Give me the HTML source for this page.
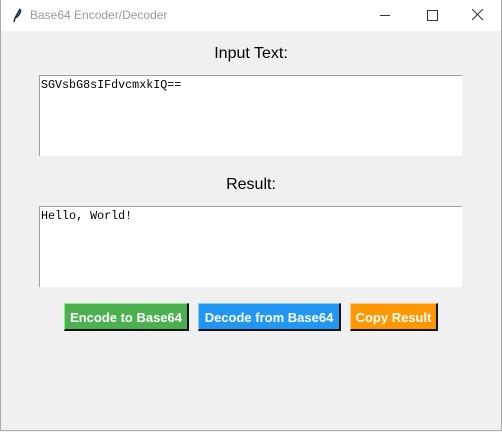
<!DOCTYPE html><html><head><style>
body{margin:0;width:502px;height:432px;overflow:hidden;background:#f0f0f0;font-family:"Liberation Sans",sans-serif;position:relative}
.win{position:absolute;left:0;top:0;width:500px;height:430px;border:1px solid #aaa;border-top:none}
.tb{position:absolute;left:0;top:0;width:502px;height:31px;background:#fff}
.t{position:absolute;left:30px;top:8px;font-size:12px;color:#999}
.lbl{position:absolute;width:502px;text-align:center;font-size:16px;color:#000}
.ta{position:absolute;left:39px;width:423px;height:81px;background:#fff;border-top:1px solid #a0a0a0;border-left:1px solid #a0a0a0;box-sizing:border-box;font-family:"Liberation Mono",monospace;font-size:11.7px;padding:2px 1px;line-height:14px}
.b{position:absolute;top:303px;height:28px;color:#fff;font-weight:bold;font-size:13px;line-height:27px;text-align:center;box-sizing:border-box;border-right:2px solid #111;border-bottom:2px solid #111;white-space:nowrap}
</style></head><body>
<div class="tb"><svg style="position:absolute;left:12px;top:8px" width="10" height="15"><path d="M8 1 L3 10 L2 14 M8 1 C10 4 6 9 3 10" stroke="#234" stroke-width="1.5" fill="#4a7ac0"/></svg>
<div class="t">Base64 Encoder/Decoder</div>
<div style="position:absolute;left:380px;top:15px;width:10px;height:1px;background:#333"></div>
<div style="position:absolute;left:427px;top:10px;width:9px;height:9px;border:1px solid #333"></div>
<svg style="position:absolute;left:472px;top:9px" width="12" height="12"><path d="M0 0L11 11M11 0L0 11" stroke="#333"/></svg></div>
<div class="win"></div>
<div class="lbl" style="top:45px">Input Text:</div>
<div class="ta" style="top:75px">SGVsbG8sIFdvcmxkIQ==</div>
<div class="lbl" style="top:176px">Result:</div>
<div class="ta" style="top:206px">Hello, World!</div>
<div class="b" style="left:64px;width:125px;background:#4caf50;border-left:1px solid #8e8;border-top:1px solid #8e8">Encode to Base64</div>
<div class="b" style="left:198px;width:143px;background:#2196f3;border-left:1px solid #8cf;border-top:1px solid #8cf">Decode from Base64</div>
<div class="b" style="left:350px;width:88px;background:#ff9800;border-left:1px solid #fc8;border-top:1px solid #fc8">Copy Result</div>
</body></html>
